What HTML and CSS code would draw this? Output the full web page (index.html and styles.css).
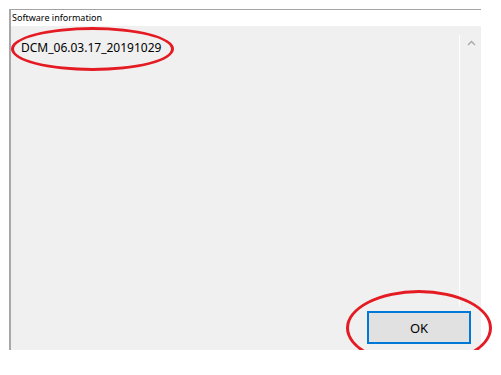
FILE: index.html
```html
<!DOCTYPE html>
<html lang="en">
<head>
    <meta charset="UTF-8">
    <title>Software information</title>
    <link rel="stylesheet" href="styles.css">
</head>
<body>
    <div class="window">
        <div class="window-title">Software information</div>
        <div class="panel">
            <div class="panel-body">
                <div class="info">
                    <span class="version marked">DCM_06.03.17_20191029</span>
                </div>
                <div class="scrollbar">
                    <svg class="scroll-up" width="9" height="6" viewBox="0 0 9 6">
                        <path d="M1 5 L4.5 1.5 L8 5" fill="none" stroke="#a6a6a6" stroke-width="1.3"/>
                    </svg>
                </div>
            </div>
            <div class="panel-footer">
                <div class="ok-wrap marked">
                    <button class="ok-button">OK</button>
                </div>
            </div>
        </div>
    </div>
</body>
</html>
```

FILE: styles.css
```css
body {
    margin: 0;
    background: #ffffff;
    font-family: "Noto Sans", "Open Sans", sans-serif;
    color: #000000;
}
.window {
    margin: 9px 0 0 9px;
    width: 470px;
    height: 340px;
    border-top: 1px solid #a3a3a3;
    border-left: 2px solid #a8a8a8;
    display: flex;
    flex-direction: column;
}
.window-title {
    height: 16px;
    padding-left: 1px;
    font-size: 9px;
    line-height: 16px;
    color: #000000;
}
.panel {
    flex: 1;
    background: #f0f0f0;
    display: flex;
    flex-direction: column;
}
.panel-body {
    flex: 1;
    display: flex;
}
.info {
    flex: 1;
    padding: 9px 0 0 10px;
}
.version {
    display: inline-block;
    font-size: 12px;
    line-height: 20px;
}
.scrollbar {
    width: 21px;
    margin: 9px 0 1px;
    border-left: 1px solid #ffffff;
    display: flex;
    justify-content: center;
    align-items: flex-start;
}
.scroll-up {
    margin: 5px 0 0 2px;
}
.panel-footer {
    flex-shrink: 0;
    display: flex;
    justify-content: flex-end;
    padding: 4px 10px 6px 0;
}
.ok-wrap {
    display: flex;
    width: 104px;
    height: 33px;
}
.ok-button {
    width: 104px;
    height: 33px;
    background: #e1e1e1;
    border: 2px solid #0078d7;
    font-family: "Noto Sans", "Open Sans", sans-serif;
    font-size: 13px;
    color: #000000;
    padding: 0;
}
.marked {
    position: relative;
}
.marked::after {
    content: "";
    position: absolute;
    border: 3px solid #e41b23;
    border-radius: 50%;
    pointer-events: none;
}
.version.marked::after {
    left: -10px;
    right: -13px;
    top: -11px;
    bottom: -13px;
}
.ok-wrap.marked::after {
    left: -21px;
    right: -21px;
    top: -21px;
    bottom: -22px;
}
```
